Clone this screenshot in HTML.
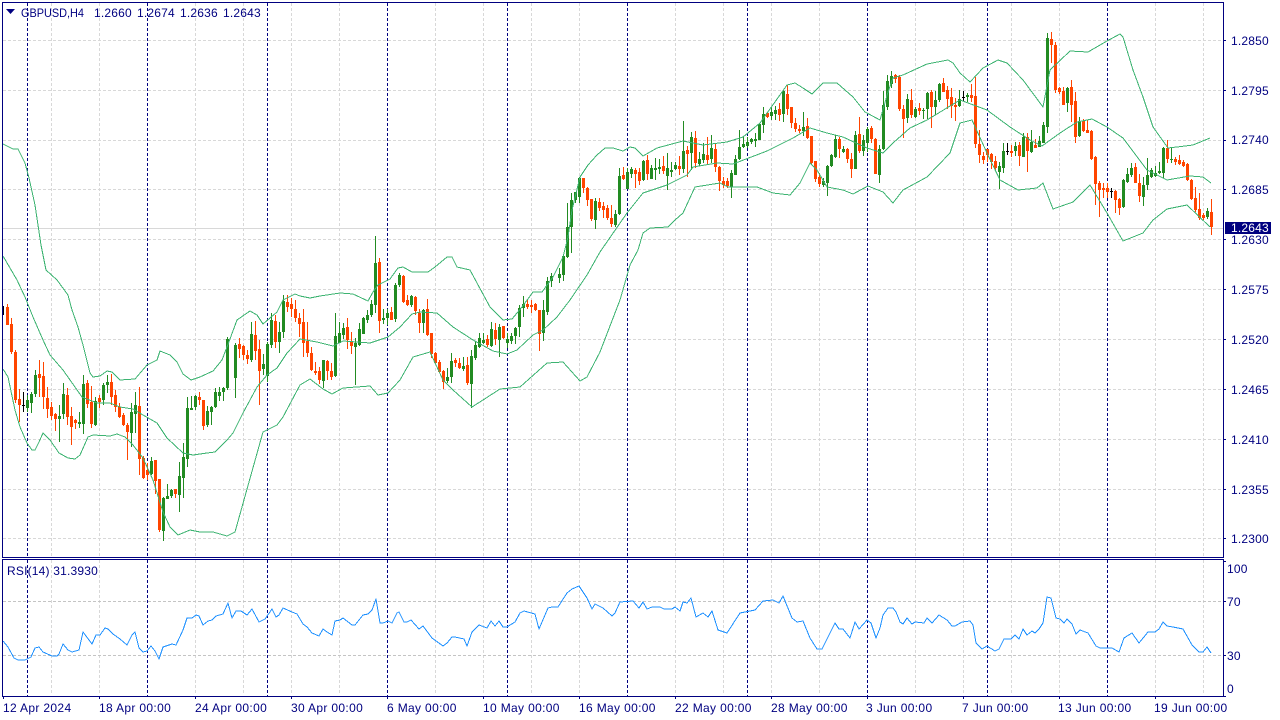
<!DOCTYPE html>
<html><head><meta charset="utf-8"><title>GBPUSD,H4</title>
<style>
html,body{margin:0;padding:0;background:#fff;width:1280px;height:720px;overflow:hidden}
svg{display:block}
text{font-family:"Liberation Sans",Arial,sans-serif;font-size:12px;fill:#000080;letter-spacing:.2px}
.a{letter-spacing:.34px}
</style></head><body>
<svg width="1280" height="720" viewBox="0 0 1280 720" xmlns="http://www.w3.org/2000/svg">
<rect width="1280" height="720" fill="#fff"/>
<g fill="none" shape-rendering="crispEdges">
<path stroke="#d8d8d8" stroke-dasharray="3 2" d="M3 40.5H1223M3 90.5H1223M3 140.5H1223M3 189.5H1223M3 239.5H1223M3 289.5H1223M3 339.5H1223M3 389.5H1223M3 439.5H1223M3 489.5H1223M3 538.5H1223"/>
<path stroke="#d8d8d8" stroke-dasharray="3 2" d="M51.5 3V556M99.5 3V556M195.5 3V556M243.5 3V556M291.5 3V556M339.5 3V556M435.5 3V556M483.5 3V556M531.5 3V556M579.5 3V556M675.5 3V556M723.5 3V556M771.5 3V556M819.5 3V556M915.5 3V556M963.5 3V556M1011.5 3V556M1059.5 3V556M1155.5 3V556M1203.5 3V556M51.5 560V695M99.5 560V695M195.5 560V695M243.5 560V695M291.5 560V695M339.5 560V695M435.5 560V695M483.5 560V695M531.5 560V695M579.5 560V695M675.5 560V695M723.5 560V695M771.5 560V695M819.5 560V695M915.5 560V695M963.5 560V695M1011.5 560V695M1059.5 560V695M1155.5 560V695M1203.5 560V695"/>
<path stroke="#c4c4c4" stroke-dasharray="3 2" d="M3 601.5H1223M3 655.5H1223"/>
<path stroke="#d8d8d8" d="M3 228.5H1223"/>
<path stroke="#000080" stroke-dasharray="3 2" d="M27.5 3V557M147.5 3V557M267.5 3V557M387.5 3V557M507.5 3V557M627.5 3V557M747.5 3V557M867.5 3V557M987.5 3V557M1107.5 3V557M27.5 560V696M147.5 560V696M267.5 560V696M387.5 560V696M507.5 560V696M627.5 560V696M747.5 560V696M867.5 560V696M987.5 560V696M1107.5 560V696"/>

<!-- green wicks -->
<path stroke="#228B22" d="M27.5 395V412M31.5 392V413M35.5 370V397M59.5 405V442M63.5 383V419M79.5 412V428M83.5 375V434M95.5 397V426M103.5 383V405M107.5 375V393M131.5 403V447M135.5 392V433M151.5 457V475M163.5 497V541M167.5 484V499M171.5 489V498M179.5 462V512M183.5 443V498M187.5 397V467M191.5 396V410M195.5 395V410M207.5 406V427M211.5 406V425M215.5 388V408M219.5 387V401M223.5 387V401M227.5 337V390M235.5 343V398M251.5 322V362M263.5 354V375M267.5 342V382M271.5 313V348M279.5 322V353M283.5 295V338M323.5 360V388M335.5 313V377M339.5 322V343M343.5 323V339M355.5 338V385M359.5 323V346M363.5 317V334M367.5 310V323M371.5 300V317M375.5 236V313M383.5 309V324M387.5 309V325M395.5 283V322M399.5 273V287M411.5 295V307M423.5 309V333M447.5 368V383M451.5 353V383M463.5 357V371M471.5 350V408M475.5 342V360M479.5 333V348M483.5 333V344M491.5 322V347M499.5 324V357M507.5 333V348M511.5 333V344M515.5 327V344M519.5 305V337M523.5 296V317M543.5 300V341M547.5 277V315M551.5 273V287M559.5 268V283M563.5 255V281M567.5 203V258M571.5 193V253M575.5 192V203M579.5 177V203M595.5 198V229M615.5 210V227M619.5 168V215M627.5 168V189M631.5 167V178M643.5 160V181M651.5 165V179M655.5 158V180M659.5 159V174M667.5 153V190M671.5 162V177M675.5 162V170M683.5 121V173M691.5 132V170M699.5 152V166M703.5 143V163M711.5 135V163M731.5 170V198M735.5 155V175M739.5 130V160M743.5 136V148M747.5 137V148M751.5 138V144M755.5 133V147M759.5 123V140M763.5 107V133M771.5 107V120M775.5 106V120M783.5 90V122M803.5 112V136M823.5 178V187M827.5 165V196M831.5 154V167M835.5 135V158M843.5 146V153M855.5 131V169M863.5 135V156M867.5 127V152M879.5 145V183M883.5 91V150M887.5 75V110M891.5 71V88M907.5 94V123M915.5 107V118M923.5 108V119M927.5 92V119M935.5 91V115M939.5 83V102M959.5 90V107M967.5 93V102M999.5 162V189M1003.5 143V173M1015.5 142V156M1023.5 133V157M1031.5 130V153M1039.5 136V147M1043.5 122V143M1047.5 33V133M1067.5 87V112M1079.5 117V137M1123.5 179V208M1127.5 168V183M1131.5 163V177M1143.5 177V206M1147.5 158V190M1151.5 168V178M1155.5 166V177M1159.5 162V174M1163.5 147V178M1171.5 147V163M1207.5 208V219"/>
<!-- green bodies -->
<path id="gb" stroke="#228B22" stroke-width="3" d="M27.5 400V408M31.5 394V403M35.5 375V394M59.5 416V419M63.5 394V414M79.5 422V424M83.5 384V424M95.5 401V425M103.5 385V400M107.5 382V385M131.5 412V433M135.5 405V414M151.5 461V474M163.5 498V531M167.5 496V499M171.5 490V496M179.5 476V495M183.5 457V478M187.5 408V459M191.5 408V410M195.5 396V407M207.5 411V425M211.5 407V412M215.5 392V407M219.5 392V396M223.5 388V392M227.5 339V388M235.5 345V378M251.5 334V360M263.5 364V369M267.5 344V376M271.5 320V345M279.5 332V342M283.5 301V332M323.5 360V381M335.5 336V376M339.5 333V343M343.5 328V335M355.5 343V347M359.5 329V345M363.5 318V334M367.5 315V320M371.5 304V315M375.5 263V305M383.5 318V320M387.5 313V318M395.5 285V319M399.5 275V285M411.5 296V305M423.5 310V323M447.5 377V381M451.5 361V377M463.5 366V369M471.5 356V384M475.5 345V358M479.5 338V347M483.5 340V343M491.5 329V346M499.5 327V340M507.5 339V343M511.5 336V341M515.5 328V336M519.5 308V327M523.5 304V308M543.5 310V333M547.5 281V312M551.5 276V281M559.5 274V278M563.5 256V275M567.5 227V257M571.5 200V227M575.5 192V200M579.5 178V197M595.5 201V220M615.5 214V225M619.5 176V214M627.5 172V189M631.5 169V174M643.5 161V180M651.5 168V179M655.5 168V170M659.5 167V169M667.5 168V176M671.5 170V172M675.5 165V169M683.5 151V169M691.5 137V153M699.5 159V164M703.5 154V160M711.5 148V159M731.5 173V187M735.5 159V175M739.5 147V159M743.5 144V147M747.5 142V146M751.5 139V142M755.5 139V141M759.5 124V140M763.5 114V125M771.5 112V116M775.5 110V114M783.5 91V114M803.5 127V131M823.5 181V185M827.5 166V183M831.5 155V166M835.5 139V157M843.5 149V152M855.5 135V169M863.5 140V151M867.5 129V143M879.5 149V175M883.5 105V149M887.5 81V107M891.5 76V84M907.5 99V118M915.5 109V117M923.5 110V111M927.5 93V109M935.5 100V107M939.5 84V100M959.5 99V106M967.5 95V97M999.5 166V172M1003.5 151V168M1015.5 146V151M1023.5 137V157M1031.5 142V152M1039.5 141V147M1043.5 125V143M1047.5 38V127M1067.5 88V103M1079.5 122V136M1123.5 180V207M1127.5 174V182M1131.5 168V175M1143.5 185V197M1147.5 175V185M1151.5 170V177M1155.5 173V176M1159.5 171V173M1163.5 148V173M1171.5 159V160M1207.5 211V217"/>
<!-- orange wicks -->
<path stroke="#FF4500" d="M7.5 304V325M11.5 318V354M15.5 350V403M19.5 389V422M39.5 360V397M43.5 362V409M47.5 387V418M51.5 402V420M55.5 413V431M67.5 388V425M71.5 407V445M75.5 419V429M87.5 380V408M91.5 386V428M99.5 395V408M111.5 374V405M115.5 390V412M119.5 403V418M123.5 413V426M127.5 423V460M139.5 387V475M143.5 456V479M147.5 463V480M155.5 460V494M159.5 479V532M175.5 489V498M199.5 392V405M203.5 400V430M239.5 338V358M243.5 345V360M247.5 350V364M255.5 321V360M259.5 340V405M275.5 315V348M287.5 295V312M291.5 298V317M295.5 300V322M299.5 313V337M303.5 309V357M307.5 322V357M311.5 347V371M315.5 362V375M319.5 367V384M327.5 360V380M331.5 363V380M347.5 318V349M351.5 332V354M379.5 258V333M391.5 307V320M403.5 275V303M407.5 295V306M415.5 296V315M419.5 309V333M427.5 299V336M431.5 333V358M435.5 352V364M439.5 360V373M443.5 370V389M455.5 358V367M459.5 358V369M467.5 357V385M487.5 335V347M495.5 323V345M503.5 326V339M527.5 300V309M531.5 300V313M535.5 303V311M539.5 310V351M583.5 178V193M587.5 187V206M591.5 199V221M599.5 198V211M603.5 202V218M607.5 205V220M611.5 205V227M623.5 167V180M635.5 168V188M639.5 168V185M647.5 155V180M663.5 156V174M679.5 156V175M687.5 146V177M695.5 131V168M707.5 137V164M715.5 143V172M719.5 166V191M723.5 177V188M727.5 178V188M767.5 112V118M779.5 103V121M787.5 85V115M791.5 107V128M795.5 118V132M799.5 125V133M807.5 118V139M811.5 136V165M815.5 161V182M819.5 173V187M839.5 137V158M847.5 148V163M851.5 153V178M859.5 117V153M871.5 126V143M875.5 138V174M895.5 74V83M899.5 75V111M903.5 105V138M911.5 89V118M919.5 103V115M931.5 90V128M943.5 78V92M947.5 86V109M951.5 88V118M955.5 98V121M971.5 84V102M975.5 77V148M979.5 130V163M983.5 152V164M987.5 149V162M991.5 153V169M995.5 156V171M1011.5 145V157M1019.5 142V166M1027.5 133V172M1035.5 139V148M1051.5 32V63M1055.5 42V93M1059.5 87V94M1063.5 87V105M1071.5 80V122M1075.5 92V143M1083.5 119V132M1087.5 120V133M1091.5 130V160M1095.5 156V205M1099.5 181V217M1103.5 183V198M1107.5 183V198M1115.5 190V213M1119.5 198V215M1135.5 163V183M1139.5 174V202M1167.5 140V163M1175.5 157V165M1179.5 155V165M1183.5 160V167M1187.5 163V181M1191.5 179V200M1195.5 187V212M1199.5 193V220M1203.5 213V220M1211.5 199V235"/>
<!-- orange bodies -->
<path id="ob" stroke="#FF4500" stroke-width="3" d="M7.5 307V325M11.5 324V352M15.5 352V400M19.5 399V405M39.5 374V378M43.5 376V397M47.5 398V409M51.5 407V416M55.5 414V419M67.5 395V417M71.5 416V427M75.5 420V423M87.5 383V404M91.5 402V424M99.5 398V402M111.5 382V397M115.5 395V407M119.5 407V417M123.5 415V425M127.5 425V432M139.5 406V459M143.5 458V478M147.5 470V475M155.5 460V481M159.5 479V530M175.5 489V494M199.5 397V400M203.5 400V426M239.5 344V349M243.5 346V355M247.5 355V359M255.5 335V351M259.5 349V371M275.5 321V342M287.5 302V307M291.5 304V309M295.5 309V318M299.5 318V324M303.5 322V343M307.5 341V353M311.5 353V370M315.5 371V373M319.5 371V380M327.5 361V371M331.5 371V377M347.5 327V340M351.5 341V346M379.5 262V321M391.5 312V320M403.5 276V302M407.5 300V305M415.5 297V311M419.5 313V323M427.5 309V335M431.5 333V354M435.5 353V363M439.5 362V372M443.5 371V382M455.5 360V363M459.5 363V368M467.5 365V383M487.5 339V345M495.5 330V339M503.5 326V338M527.5 304V307M531.5 305V307M535.5 304V310M539.5 310V334M583.5 178V188M587.5 188V200M591.5 199V219M599.5 202V208M603.5 206V210M607.5 208V218M611.5 218V224M623.5 175V179M635.5 170V174M639.5 172V181M647.5 160V174M663.5 166V171M679.5 166V169M687.5 150V154M695.5 138V163M707.5 155V160M715.5 149V167M719.5 167V181M723.5 181V185M727.5 181V186M767.5 113V117M779.5 109V115M787.5 94V109M791.5 107V123M795.5 123V129M799.5 129V131M807.5 126V138M811.5 136V163M815.5 161V179M819.5 177V184M839.5 139V149M847.5 149V159M851.5 159V169M859.5 134V151M871.5 128V139M875.5 139V174M895.5 75V79M899.5 77V109M903.5 109V119M911.5 100V115M919.5 108V111M931.5 92V107M943.5 83V92M947.5 90V99M951.5 97V106M955.5 105V107M971.5 95V98M975.5 96V144M979.5 144V155M983.5 156V160M987.5 149V155M991.5 154V162M995.5 161V168M1011.5 151V153M1019.5 145V156M1027.5 137V151M1035.5 145V148M1051.5 39V45M1055.5 45V90M1059.5 88V92M1063.5 91V105M1071.5 87V105M1075.5 101V137M1083.5 121V131M1087.5 130V133M1091.5 131V159M1095.5 157V184M1099.5 183V190M1103.5 188V190M1107.5 188V192M1115.5 191V200M1119.5 199V208M1135.5 167V183M1139.5 183V196M1167.5 148V159M1175.5 159V162M1179.5 160V164M1183.5 162V166M1187.5 164V180M1191.5 180V199M1195.5 198V210M1199.5 209V218M1203.5 215V218M1211.5 212V227"/>
<use href="#gb" style="stroke:#32CD32;stroke-width:1" stroke-width="1"/>
<use href="#ob" style="stroke:#FF8C00;stroke-width:1" stroke-width="1"/>
<!-- black dojis -->
<path stroke="#000" d="M3.5 306V315M23.5 392V412M22 405.5H25M963.5 91V101M962 97.5H965M1007.5 143V155M1006 151.5H1009M1111.5 188V198M1110 191.5H1113"/>
</g>
<g fill="none" stroke-linejoin="round" shape-rendering="crispEdges">
<polyline stroke="#3CB371" points="3,144 13,149 18,149 25,163 29,178 35,205 41,245 46,270 57,280 68,295 72,310 78,327 83,345 90,373 93,377 100,376 107,371 112,372 120,380 135,379 147,365 157,360 160,351 170,355 177,362 183,374 191,380 200,377 213,371 222,360 227,347 237,320 250,311 257,315 263,324 277,312 283,300 295,294 300,296 310,298 320,296 340,293 353,294 368,301 373,292 378,285 390,279 398,268 403,267 412,272 428,272 435,267 447,257 452,257 457,267 470,270 477,283 490,307 503,320 512,319 522,307 533,292 542,292 553,277 563,257 568,237 572,210 580,177 588,165 597,155 605,148 613,148 623,151 630,147 635,148 643,156 657,148 683,141 703,145 727,142 743,137 760,123 787,85 795,83 803,88 812,94 823,83 837,83 853,97 865,112 880,120 888,92 893,78 903,75 927,64 948,60 953,63 960,73 970,82 983,68 998,60 1007,63 1023,80 1043,107 1050,70 1070,51 1088,52 1107,41 1120,34 1123,37 1133,70 1143,97 1153,127 1168,148 1177,147 1193,145 1210,138"/>
<polyline stroke="#3CB371" points="3,256 17,280 25,297 33,317 43,340 50,355 63,370 82,397 97,403 110,403 120,407 133,409 143,415 157,423 167,438 183,453 193,455 207,453 215,452 227,440 233,433 243,413 257,387 267,375 277,368 287,353 300,339 317,342 333,346 343,341 357,342 370,343 388,337 400,327 412,314 420,312 437,313 453,327 473,340 493,351 507,354 517,350 533,335 543,330 557,317 570,300 587,275 600,252 627,213 643,193 667,185 687,175 693,167 717,163 733,164 767,151 793,138 810,128 827,133 843,137 867,148 883,153 893,143 910,128 927,120 960,100 987,110 1010,127 1030,140 1042,146 1060,133 1077,122 1092,119 1107,127 1123,138 1147,170 1167,180 1190,176 1203,177 1211,183"/>
<polyline stroke="#3CB371" points="3,369 8,377 15,410 20,427 27,443 32,450 35,450 39,442 43,433 50,440 59,453 68,458 75,459 80,455 88,437 93,435 110,436 117,434 125,437 133,445 143,458 153,480 163,512 170,527 178,535 190,530 200,532 213,532 227,536 235,532 242,507 263,432 277,425 283,417 300,385 310,379 323,389 332,394 343,388 370,386 378,395 388,393 400,380 413,357 430,352 443,380 453,390 472,407 483,400 500,389 520,387 547,363 563,362 580,381 587,377 600,352 620,300 630,265 638,250 643,233 650,228 668,227 675,220 683,213 695,187 720,183 728,187 757,187 773,193 790,195 800,183 810,163 817,170 827,187 843,190 853,194 868,186 883,192 893,203 903,190 927,177 950,153 960,123 972,120 987,153 1000,180 1018,190 1037,188 1043,183 1053,209 1073,202 1090,185 1107,213 1123,241 1143,233 1153,220 1167,209 1187,205 1210,227"/>
<polyline stroke="#1E90FF" points="3,641 8,647 14,658 18,660 25,660 31,657 35,648 39,647 43,652 52,656 57,656 59,654 63,644 68,650 72,652 79,650 83,632 92,644 96,635 100,635 105,628 108,629 113,634 120,639 127,645 132,635 135,632 139,648 143,652 147,651 151,646 155,651 159,659 163,647 172,644 176,645 183,630 187,618 192,618 196,615 199,616 203,625 208,621 212,620 216,616 223,614 228,603 232,618 236,611 241,611 247,615 252,609 259,622 265,619 272,609 276,617 279,615 283,608 292,612 297,614 303,624 307,627 312,633 319,636 323,629 327,632 332,635 335,621 340,620 343,618 352,625 355,625 363,615 368,614 372,610 376,599 380,623 383,623 388,621 392,623 397,613 399,612 404,622 407,622 411,620 419,629 423,626 432,638 443,646 447,643 452,637 455,637 464,639 467,646 472,632 479,625 487,628 491,621 495,626 499,621 503,627 507,627 515,622 520,613 524,611 535,614 539,629 548,608 552,607 558,607 567,593 572,589 579,586 587,598 592,609 595,604 603,608 612,616 615,613 620,602 633,601 639,608 643,602 647,609 652,607 660,607 664,609 672,609 675,607 680,611 683,602 687,603 691,598 696,617 703,613 708,617 712,611 718,630 727,633 740,613 745,612 755,610 763,601 773,600 779,603 783,596 792,618 797,622 803,621 810,638 817,649 822,649 835,623 839,629 843,629 850,638 855,622 859,629 867,620 871,623 876,638 880,628 883,615 888,608 893,608 896,612 900,622 903,624 907,618 912,624 915,622 924,623 927,618 932,623 939,615 947,620 952,626 955,626 962,622 970,621 973,625 976,643 982,649 987,646 995,651 999,649 1004,639 1011,639 1015,635 1019,639 1023,629 1027,635 1032,631 1035,633 1039,629 1043,623 1047,597 1051,598 1056,618 1060,619 1064,623 1067,619 1072,624 1076,634 1080,630 1088,633 1096,646 1100,648 1112,648 1119,652 1124,638 1132,633 1139,643 1148,632 1155,632 1159,629 1163,622 1167,626 1173,627 1183,629 1192,645 1199,652 1203,652 1207,647 1211,653"/>
</g>
<!-- frames -->
<g fill="none" stroke="#000080" shape-rendering="crispEdges">
<path d="M2.5 2.5H1223.5V557.5H2.5Z"/>
<path d="M2.5 559.5H1223.5V696.5H2.5Z"/>
<path d="M1223 40.5h3M1223 90.5h3M1223 140.5h3M1223 189.5h3M1223 239.5h3M1223 289.5h3M1223 339.5h3M1223 389.5h3M1223 439.5h3M1223 489.5h3M1223 538.5h3M1223 561.5h3M1223 601.5h3M1223 655.5h3M1223 696.5h3"/>
<path d="M3.5 696v3M99.5 696v3M195.5 696v3M291.5 696v3M387.5 696v3M483.5 696v3M579.5 696v3M675.5 696v3M771.5 696v3M867.5 696v3M963.5 696v3M1059.5 696v3M1155.5 696v3"/>
</g>
<polygon points="6,9 15,9 10.5,14" fill="#000080"/>
<text x="21" y="17" textLength="63" lengthAdjust="spacingAndGlyphs" style="letter-spacing:0">GBPUSD,H4</text>
<text x="94" y="17">1.2660</text><text x="137" y="17">1.2674</text><text x="180" y="17">1.2636</text><text x="223" y="17">1.2643</text>
<text x="7" y="575">RSI(14) 31.3930</text>
<text x="1231" y="45">1.2850</text><text x="1231" y="95">1.2795</text><text x="1231" y="144">1.2740</text><text x="1231" y="194">1.2685</text><text x="1231" y="244">1.2630</text><text x="1231" y="294">1.2575</text><text x="1231" y="344">1.2520</text><text x="1231" y="394">1.2465</text><text x="1231" y="444">1.2410</text><text x="1231" y="494">1.2355</text><text x="1231" y="543">1.2300</text>
<rect x="1225" y="222" width="46" height="12" fill="#000080"/>
<text x="1231" y="232" style="fill:#fff">1.2643</text>
<text x="1227" y="573">100</text><text x="1227" y="606">70</text><text x="1227" y="660">30</text><text x="1227" y="693">0</text>
<text class="a" x="3" y="712">12 Apr 2024</text><text class="a" x="99" y="712">18 Apr 00:00</text><text class="a" x="195" y="712">24 Apr 00:00</text><text class="a" x="291" y="712">30 Apr 00:00</text><text class="a" x="387" y="712">6 May 00:00</text><text class="a" x="483" y="712">10 May 00:00</text><text class="a" x="579" y="712">16 May 00:00</text><text class="a" x="675" y="712">22 May 00:00</text><text class="a" x="771" y="712">28 May 00:00</text><text class="a" x="866" y="712">3 Jun 00:00</text><text class="a" x="962" y="712">7 Jun 00:00</text><text class="a" x="1058" y="712">13 Jun 00:00</text><text class="a" x="1154" y="712">19 Jun 00:00</text>
</svg>
</body></html>
